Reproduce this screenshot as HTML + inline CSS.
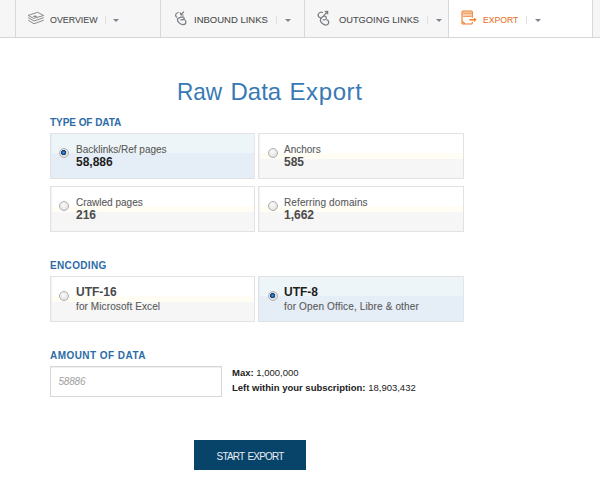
<!DOCTYPE html>
<html><head><meta charset="utf-8">
<style>
*{margin:0;padding:0;box-sizing:border-box}
html,body{width:600px;height:495px;overflow:hidden;background:#fff;font-family:"Liberation Sans",sans-serif;position:relative}
.abs{position:absolute;white-space:nowrap}
#bar{position:absolute;left:0;top:0;width:600px;height:38px;background:#f6f6f6;border-bottom:1px solid #d6d6d6}
.tab{position:absolute;top:0;height:37px;border-left:1px solid #d9d9d9}
.tab .t{position:absolute;top:15px;font-size:9.6px;color:#4a4a4a;-webkit-text-stroke:0.08px currentColor;line-height:10px;transform-origin:0 0}
.tab .sep{position:absolute;top:16px;width:1px;height:8px;background:#e0e0e0}
.tab .car{position:absolute;top:19px;width:0;height:0;border-left:3px solid transparent;border-right:3px solid transparent;border-top:3px solid #7b8590}
.tab svg{position:absolute;top:10px}
h1 span{position:absolute;top:0;transform-origin:0 0}
h1 span:first-child{transform:scaleX(0.94)}
h1{position:absolute;left:177px;top:78px;font-size:24px;font-weight:normal;color:#3879b5;line-height:28px;white-space:nowrap}
.lbl{position:absolute;left:50px;font-size:10px;font-weight:bold;color:#2c6ca6;line-height:12px;white-space:nowrap}
.box{position:absolute;border:1px solid #e2e2e4;box-shadow:inset 1px 0 0 #f2f2f2;height:46px;background:linear-gradient(#fff 0,#fff 19px,#fffdf4 19px,#fffdf4 25px,#f6f6f6 25px)}
.box.sel{border-color:#dde2e3;border-top-color:#e2e2e2;border-right-color:#e4e6ea;box-shadow:inset 1px 0 0 #e4eef4;background:linear-gradient(#edf5f8 0,#edf5f8 19px,#e5edf6 19px)}
.radio{position:absolute;left:8px;top:14px;width:10px;height:10px;border-radius:50%;border:1px solid #adadad;background:radial-gradient(circle at 40% 35%,#fafafa,#dcdcdc)}
.sel .bn{color:#1e1e1e}
.sel .radio{border-color:#b4b4b4;background:radial-gradient(circle at 45% 45%,#4a9ae0 0,#1f63aa 1.4px,#12396b 2.3px,#dcdcdc 2.9px,#ececec 100%)}
.r .radio{left:8.7px}
.bt{position:absolute;left:25px;font-size:10px;color:#5a5a5a;-webkit-text-stroke:0.1px currentColor;line-height:12px;white-space:nowrap}
.bn{position:absolute;left:25px;font-size:12px;font-weight:bold;color:#4a4a4a;line-height:14px;white-space:nowrap}
</style></head><body>
<div id="bar">
  <div class="tab" style="left:15px;width:145px">
    
    <span class="t" style="left:34px;transform:scaleX(0.922)">OVERVIEW</span>
    <span class="sep" style="left:89px"></span>
    <span class="car" style="left:97px"></span>
  </div>
  <div class="tab" style="left:160px;width:144px">
    <span class="t" style="left:33px;transform:scaleX(0.99)">INBOUND LINKS</span>
    <span class="sep" style="left:115px"></span>
    <span class="car" style="left:124px"></span>
  </div>
  <div class="tab" style="left:304px;width:144px">
    <span class="t" style="left:34px;transform:scaleX(0.969)">OUTGOING LINKS</span>
    <span class="sep" style="left:122px"></span>
    <span class="car" style="left:131px"></span>
  </div>
  <div class="tab" style="left:448px;width:144px;background:#fff;height:37px">
    <span class="t" style="left:34px;color:#e8762a;transform:scaleX(0.90)">EXPORT</span>
    <span class="sep" style="left:77px"></span>
    <span class="car" style="left:86px"></span>
  </div>
  <div class="tab" style="left:592px;width:8px"></div>
</div>

<svg style="position:absolute;left:0;top:0" width="600" height="38" viewBox="0 0 600 38" fill="none" stroke-linecap="round" stroke-linejoin="round">
  <g stroke="#858585" stroke-width="0.95">
    <path d="M28.5 15.3 L37.5 12.3 L43.7 15.5 L34 18.3 Z"/>
    <path d="M28.5 17.8 L34 21 L43.3 17.8"/>
    <path d="M28.5 20.4 L34 23.8 L43.3 20.4"/>
  </g>
  <path d="M32.5 16.9 L35 15.3 L37.5 16.7 Z" fill="#7a7a7a"/>
  <g stroke="#7a7e84" stroke-width="1.25">
    <path d="M178.2 12.5 C176.8 12.9 175.6 13.9 175.6 15 C175.6 16 176 16.8 176.7 17.2"/>
    <path d="M183.6 11.9 L181.2 14.6 M180.3 12.9 L181 14.8 L183 15"/>
    <path d="M178 18.6 C179 17.6 181 16.8 182.6 16.8 C183.8 16.9 184.4 17.9 184 18.8 C183.6 19.7 182.3 20.1 180.8 19.9"/>
    <path d="M177.5 18.8 C177.2 20.2 177.6 21.4 178.6 22.4 C179.8 23.7 181.4 24.6 182.9 24.6 C184.6 24.6 185.9 23.5 185.9 22 C185.9 20.9 185.3 19.9 184.3 19.5"/>
  </g>
  <g stroke="#7a7e84" stroke-width="1.25">
    <path d="M322.4 12.5 C321 11.8 318.8 12.6 318.2 14.4 C317.9 15.9 318.9 17.3 320.5 17.8"/>
    <path d="M323.8 15.7 L326.3 12.8"/>
    <path d="M321.2 18.3 C322.2 16.8 323.6 16 324.8 16.2 C326 16.4 326.6 17.5 326.3 18.6 C326 19.6 324.6 20.1 323.2 19.9"/>
    <path d="M320.7 18.6 C320.1 20 320.3 21.6 321.5 22.8 C322.8 24.1 324.6 25.2 326.2 25 C327.8 24.8 328.8 23.3 328.6 21.6 C328.5 20.6 327.8 20 326.9 19.8"/>
  </g>
  <path d="M324.2 10.9 L328.3 10.8 L328.2 14.9 Z" fill="#7a7e84"/>
  <rect x="462.6" y="11.4" width="9.2" height="5.4" fill="#f9cfae"/>
  <g stroke="#ee7b2a" stroke-width="1.1">
    <path d="M472.3 17.3 V12 Q472.3 11 471.3 11 H463 Q462 11 462 12 V23 Q462 24 463 24 H471.3 Q472.3 24 472.3 23 V22"/>
    <path d="M463.5 13.2 H471 M463.5 16.4 H471" stroke-width="1" stroke="#f0955a"/>
    <path d="M462.6 21.6 L464.6 23.5"/>
    <path d="M470 19.8 H474.5" stroke-width="1.6"/>
  </g>
  <path d="M474 17.6 L476.6 19.8 L474 22 Z" fill="#ee7b2a"/>
</svg>

<h1><span style="left:0">Raw</span><span style="left:53.5px">Data</span><span style="left:112.5px;letter-spacing:0.6px">Export</span></h1>

<div class="lbl" style="top:117px;letter-spacing:-0.05px">TYPE OF DATA</div>
<div class="box sel" style="left:50px;top:133px;width:205px">
  <span class="radio"></span>
  <span class="bt" style="top:10px">Backlinks/Ref pages</span>
  <span class="bn" style="top:21px">58,886</span>
</div>
<div class="box r" style="left:258px;top:133px;width:206px">
  <span class="radio"></span>
  <span class="bt" style="top:10px">Anchors</span>
  <span class="bn" style="top:21px">585</span>
</div>
<div class="box" style="left:50px;top:186px;width:205px">
  <span class="radio"></span>
  <span class="bt" style="top:10px">Crawled pages</span>
  <span class="bn" style="top:21px">216</span>
</div>
<div class="box r" style="left:258px;top:186px;width:206px">
  <span class="radio"></span>
  <span class="bt" style="top:10px;letter-spacing:0.12px">Referring domains</span>
  <span class="bn" style="top:21px">1,662</span>
</div>

<div class="lbl" style="top:260px;letter-spacing:0.35px">ENCODING</div>
<div class="box" style="left:50px;top:276px;width:205px">
  <span class="radio"></span>
  <span class="bn" style="top:8px">UTF-16</span>
  <span class="bt" style="top:24px;letter-spacing:0.1px">for Microsoft Excel</span>
</div>
<div class="box sel r" style="left:258px;top:276px;width:206px">
  <span class="radio"></span>
  <span class="bn" style="top:8px">UTF-8</span>
  <span class="bt" style="top:24px;letter-spacing:0.15px">for Open Office, Libre &amp; other</span>
</div>

<div class="lbl" style="top:350px;letter-spacing:0.45px">AMOUNT OF DATA</div>
<div class="abs" style="left:50px;top:366px;width:172px;height:31px;border:1px solid #d3d8dc;background:#fff;box-shadow:inset 0 1px 1px rgba(0,0,0,0.07)">
  <span class="abs" style="left:7.5px;top:8.5px;font-size:10px;letter-spacing:-0.2px;font-style:italic;color:#a0a0a0">58886</span>
</div>
<div class="abs" style="left:232px;top:367px;font-size:9.5px;color:#222"><b>Max:</b> 1,000,000</div>
<div class="abs" style="left:232px;top:382px;font-size:9.5px;color:#222"><b>Left within your subscription:</b> 18,903,432</div>

<div class="abs" style="left:194px;top:440px;width:112px;height:30px;background:#08436a;color:#e8eef4;font-size:10px;letter-spacing:-0.85px;word-spacing:1.6px;text-align:center;line-height:30px;padding-top:2px">START EXPORT</div>
</body></html>
